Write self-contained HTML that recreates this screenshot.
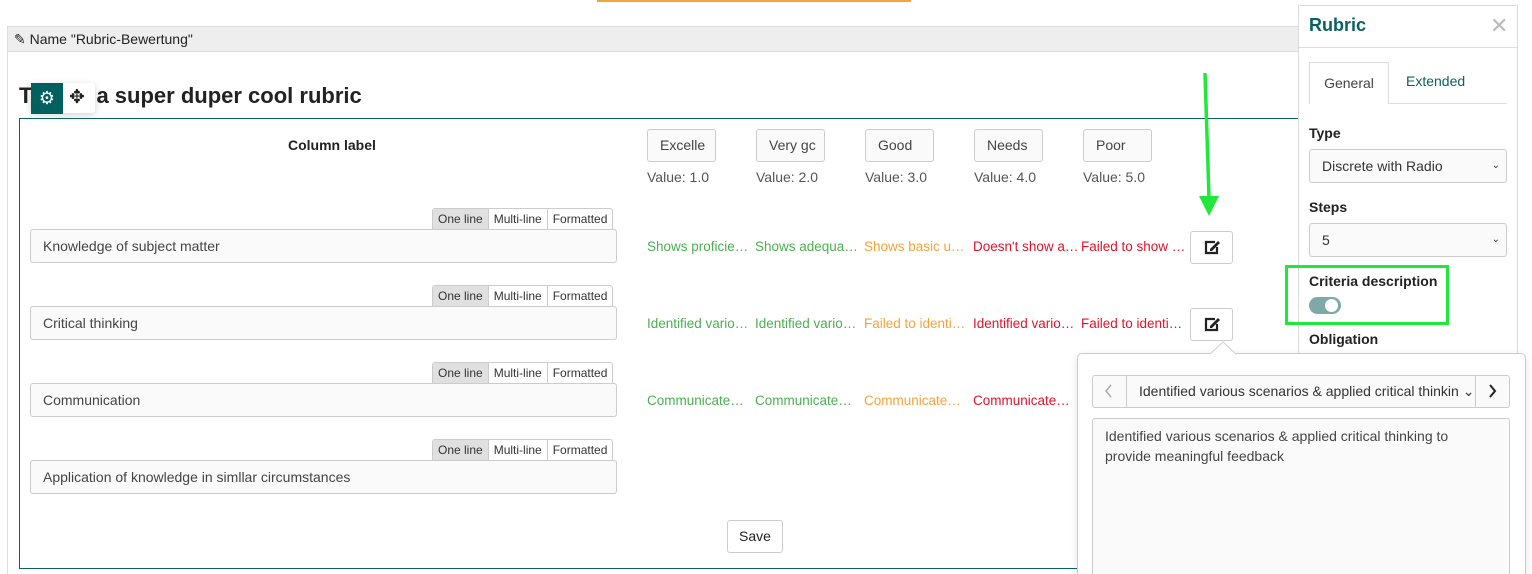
<!DOCTYPE html>
<html style="overflow:hidden;height:574px"><head><meta charset="utf-8"><style>
*{box-sizing:border-box}
body{margin:0;width:1532px;height:574px;overflow:hidden;background:#fff;font-family:"Liberation Sans",sans-serif;font-size:14px;color:#333;position:relative}
.a{position:absolute}
.inp{position:absolute;border:1px solid #ccc;border-radius:3px;background:#fafafa;padding:0 12px;line-height:32px;font-size:14px;color:#444;white-space:nowrap;overflow:hidden}
.seg{position:absolute;display:flex;border:1px solid #ccc;border-radius:3px 3px 0 0;font-size:12px;height:22px;line-height:21px;background:#fff}
.seg span{padding:0 5px;border-left:1px solid #ccc;color:#333}
.seg span:first-child{border-left:0;background:#e0e0e0}
.lv{position:absolute;font-size:13.5px;white-space:nowrap}
.g{color:#4caf50}.o{color:#f5a33a}.r{color:#e0132b}
.val{position:absolute;font-size:14px;color:#555}
.hb{position:absolute;width:69px;height:33px;border:1px solid #ccc;border-radius:3px;background:#fafafa;line-height:31px;padding-left:12px;font-size:14px;color:#444;overflow:hidden;white-space:nowrap}
.eb{position:absolute;width:43px;height:33px;border:1px solid #ccc;border-radius:3px;background:#fff}
.lbl{position:absolute;font-weight:bold;font-size:14px;color:#222}
.sel{position:absolute;border:1px solid #ccc;border-radius:3px;background:#fafafa;height:34px;line-height:32px;padding-left:12px;color:#333;font-size:14px}
</style></head><body>
<div class="a" style="left:597px;top:0;width:314px;height:2px;background:#f5a33a"></div>
<div class="a" style="left:7px;top:26px;width:1300px;height:560px;border:1px solid #ddd;border-right:0"></div>
<div class="a" style="left:8px;top:27px;width:1300px;height:25px;background:#eee;border-bottom:1px solid #ddd"></div>
<div class="a" style="left:14px;top:31px;font-size:14px;color:#222">✎ Name "Rubric-Bewertung"</div>
<div class="a" style="left:19px;top:83px;font-size:22px;font-weight:bold;color:#222">T<span style="margin-left:64px">a super duper cool rubric</span></div>
<div class="a" style="left:31px;top:83px;width:64px;height:30px;background:#fff;border-radius:3px;box-shadow:0 2px 8px rgba(0,0,0,.18)"></div>
<div class="a" style="left:31px;top:83px;width:32px;height:31px;background:#005f5f;color:#fff;font-size:18px;text-align:center;line-height:30px">⚙</div>
<div class="a" style="left:69px;top:83px;font-size:19px;line-height:30px;color:#222">✥</div>
<div class="a" style="left:19px;top:118px;width:1300px;height:451px;border:1px solid #0b6060"></div>
<div class="lbl" style="left:288px;top:137px">Column label</div>

<div class="hb" style="left:647px;top:129px">Excelle</div>
<div class="hb" style="left:756px;top:129px">Very gc</div>
<div class="hb" style="left:865px;top:129px">Good</div>
<div class="hb" style="left:974px;top:129px">Needs</div>
<div class="hb" style="left:1083px;top:129px">Poor</div>
<div class="val" style="left:647px;top:169px">Value: 1.0</div>
<div class="val" style="left:756px;top:169px">Value: 2.0</div>
<div class="val" style="left:865px;top:169px">Value: 3.0</div>
<div class="val" style="left:974px;top:169px">Value: 4.0</div>
<div class="val" style="left:1083px;top:169px">Value: 5.0</div>

<div class="seg" style="left:432px;top:208px"><span>One line</span><span>Multi-line</span><span>Formatted</span></div>
<div class="inp" style="left:30px;top:229px;width:587px;height:34px">Knowledge of subject matter</div>
<div class="seg" style="left:432px;top:285px"><span>One line</span><span>Multi-line</span><span>Formatted</span></div>
<div class="inp" style="left:30px;top:306px;width:587px;height:34px">Critical thinking</div>
<div class="seg" style="left:432px;top:362px"><span>One line</span><span>Multi-line</span><span>Formatted</span></div>
<div class="inp" style="left:30px;top:383px;width:587px;height:34px">Communication</div>
<div class="seg" style="left:432px;top:439px"><span>One line</span><span>Multi-line</span><span>Formatted</span></div>
<div class="inp" style="left:30px;top:460px;width:587px;height:34px">Application of knowledge in simllar circumstances</div>

<div class="lv g" style="left:647px;top:239px">Shows proficie…</div>
<div class="lv g" style="left:755px;top:239px">Shows adequa…</div>
<div class="lv o" style="left:864px;top:239px">Shows basic u…</div>
<div class="lv r" style="left:973px;top:239px">Doesn't show a…</div>
<div class="lv r" style="left:1081px;top:239px">Failed to show …</div>
<div class="lv g" style="left:647px;top:316px">Identified vario…</div>
<div class="lv g" style="left:755px;top:316px">Identified vario…</div>
<div class="lv o" style="left:864px;top:316px">Failed to identi…</div>
<div class="lv r" style="left:973px;top:316px">Identified vario…</div>
<div class="lv r" style="left:1081px;top:316px">Failed to identi…</div>
<div class="lv g" style="left:647px;top:393px">Communicate…</div>
<div class="lv g" style="left:755px;top:393px">Communicate…</div>
<div class="lv o" style="left:864px;top:393px">Communicate…</div>
<div class="lv r" style="left:973px;top:393px">Communicate…</div>

<div class="eb" style="left:1190px;top:231px"><svg width="41" height="31" viewBox="0 0 41 31"><path d="M24 10h-9v11h11v-6" fill="none" stroke="#222" stroke-width="2.2"/><path d="M19 17l8-8 2 2-8 8h-2z" fill="#222"/></svg></div>
<div class="eb" style="left:1190px;top:308px"><svg width="41" height="31" viewBox="0 0 41 31"><path d="M24 10h-9v11h11v-6" fill="none" stroke="#222" stroke-width="2.2"/><path d="M19 17l8-8 2 2-8 8h-2z" fill="#222"/></svg></div>

<div class="a" style="left:727px;top:520px;width:56px;height:33px;border:1px solid #ccc;border-radius:3px;background:#fff;text-align:center;line-height:31px;color:#222">Save</div>

<svg class="a" style="left:1195px;top:70px" width="30" height="150"><path d="M10 3 L14 128" stroke="#1fe83a" stroke-width="3.5"/><path d="M4 126 L24 126 L14 146z" fill="#1fe83a"/></svg>

<div class="a" style="left:1298px;top:5px;width:220px;height:380px;background:#fff;border:1px solid #ddd"></div>
<div class="a" style="left:1309px;top:15px;font-size:18px;font-weight:bold;color:#0b6060">Rubric</div>
<div class="a" style="left:1490px;top:13px;font-size:22px;color:#bbb">✕</div>
<div class="a" style="left:1299px;top:47px;width:218px;height:1px;background:#ddd"></div>
<div class="a" style="left:1309px;top:103px;width:198px;height:1px;background:#ddd"></div>
<div class="a" style="left:1309px;top:62px;width:80px;height:42px;border:1px solid #ddd;border-bottom:0;background:#fff;text-align:center;line-height:40px;color:#444">General</div>
<div class="a" style="left:1406px;top:73px;color:#0b6060">Extended</div>
<div class="lbl" style="left:1309px;top:125px">Type</div>
<div class="sel" style="left:1309px;top:149px;width:198px">Discrete with Radio<span style="position:absolute;right:6px;font-size:10px">⌄</span></div>
<div class="lbl" style="left:1309px;top:199px">Steps</div>
<div class="sel" style="left:1309px;top:223px;width:198px">5<span style="position:absolute;right:6px;font-size:10px">⌄</span></div>
<div class="a" style="left:1285px;top:265px;width:164px;height:60px;border:3px solid #1fe83a"></div>
<div class="lbl" style="left:1309px;top:273px">Criteria description</div>
<div class="a" style="left:1309px;top:297px;width:32px;height:17px;border-radius:9px;background:#7fa9a8"></div>
<div class="a" style="left:1325px;top:299px;width:13px;height:13px;border-radius:50%;background:#fff"></div>
<div class="lbl" style="left:1309px;top:331px">Obligation</div>

<div class="a" style="left:1077px;top:353px;width:449px;height:240px;background:#fff;border:1px solid #ccc;border-radius:5px;box-shadow:0 2px 8px rgba(0,0,0,.1)"></div>
<svg class="a" style="left:1210px;top:341px" width="26" height="14"><path d="M0 13 L13 1 L26 13" fill="#fff" stroke="#ccc"/></svg>
<div class="a" style="left:1092px;top:375px;width:418px;height:33px;border:1px solid #ccc;border-radius:3px;background:#fafafa"></div>
<div class="a" style="left:1126px;top:375px;width:1px;height:33px;background:#ccc"></div>
<div class="a" style="left:1475px;top:375px;width:1px;height:33px;background:#ccc"></div>
<svg class="a" style="left:1102px;top:383px" width="14" height="16"><path d="M9 2 L4 8 L9 14" fill="none" stroke="#aaa" stroke-width="1.5"/></svg>
<svg class="a" style="left:1486px;top:383px" width="14" height="16"><path d="M4 2 L9 8 L4 14" fill="none" stroke="#222" stroke-width="2"/></svg>
<div class="a" style="left:1139px;top:383px;color:#333;white-space:nowrap;width:334px;overflow:hidden">Identified various scenarios &amp; applied critical thinkin ⌄</div>
<div class="a" style="left:1092px;top:418px;width:418px;height:170px;border:1px solid #ccc;border-radius:3px;background:#fafafa;padding:7px 12px;line-height:20px;color:#444">Identified various scenarios &amp; applied critical thinking to provide meaningful feedback</div>
</body></html>
